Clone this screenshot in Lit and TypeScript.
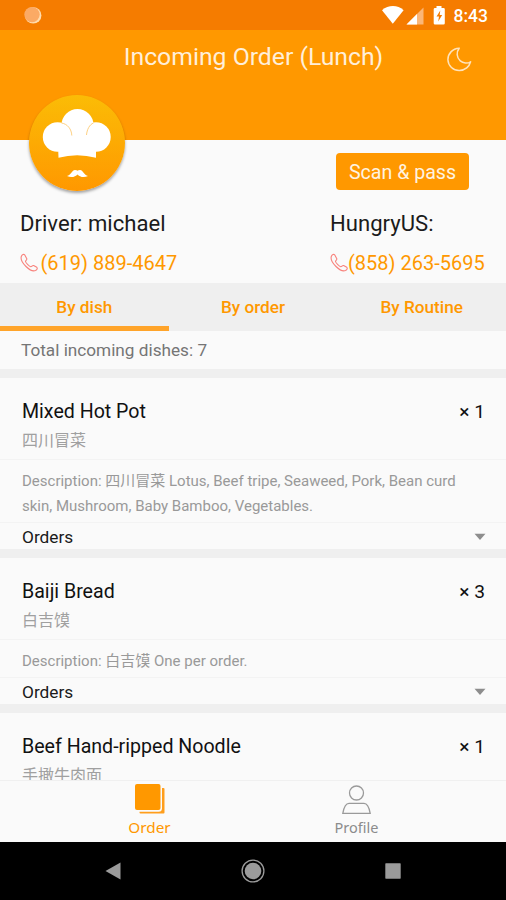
import { LitElement, html, css, nothing } from "lit";
import { customElement, property } from "lit/decorators.js";

interface Dish {
  name: string;
  local: string;
  count: number;
  description?: string;
}

const DISHES: Dish[] = [
  {
    name: "Mixed Hot Pot",
    local: "四川冒菜",
    count: 1,
    description:
      "四川冒菜 Lotus, Beef tripe, Seaweed, Pork, Bean curd skin, Mushroom, Baby Bamboo, Vegetables.",
  },
  { name: "Baiji Bread", local: "白吉馍", count: 3, description: "白吉馍 One per order." },
  { name: "Beef Hand-ripped Noodle", local: "手撖牛肉面", count: 1 },
];

@customElement("status-bar")
class StatusBar extends LitElement {
  static styles = css`
    :host { display: flex; align-items: center; height: 30px; background: #f57c00; padding: 0 18px 0 23px; box-sizing: border-box; }
    .grow { flex: 1; }
    .time { font-size: 17.500px; font-weight: 500; color: #fff; line-height: 30px; padding-top: 2px; }
    svg { display: block; }
  `;
  render() {
    return html`
      <svg width="20" height="30" viewBox="0 0 20 30">
        <circle cx="10.2" cy="15.4" r="8.2" fill="#ffdcae" />
        <circle cx="9" cy="14.6" r="7.7" fill="#fbaa65" />
      </svg>
      <span class="grow"></span>
      <svg width="72" height="30" viewBox="381 0 72 30">
        <path d="M381 10.200C387.500 4.700 396.500 4.700 402.600 10.200L391.800 23.800Z" fill="#fff" />
        <path d="M422.500 7.500V24.500H405.500Z" fill="#fbb678" />
        <path d="M416 14V24.500H405.500Z" fill="#fff" />
        <path d="M435.500 6H440.500V8H442.500Q443.800 8 443.800 9.300V23.300Q443.800 24.600 442.500 24.600H434Q432.700 24.600 432.700 23.300V9.300Q432.700 8 434 8H435.500Z" fill="#fff" />
        <path d="M439.300 10.500L435.500 16.500H438L437.200 21.500L441.200 15H438.700Z" fill="#f57c00" />
      </svg>
      <span class="time">8:43</span>
    `;
  }
}

@customElement("call-link")
class CallLink extends LitElement {
  @property() number = "";
  static styles = css`
    :host { display: flex; align-items: center; height: 26px; color: #ff9800; font-size: 20px; white-space: nowrap; }
    svg { display: block; flex: none; width: 18px; height: 19px; margin-right: var(--call-gap, 2.500px); }
    .num { line-height: 26px; }
  `;
  render() {
    return html`
      <svg viewBox="0 0 18 19" fill="none" stroke="#f8827c" stroke-width="1.1" stroke-linejoin="round" stroke-linecap="round">
        <path d="M1.400 3.200C.4 5.800 2.500 10 6 13.500C9.500 16.900 13.300 18.500 15.500 17.500C17 16.700 17.800 15.400 16.800 14.300L13.600 12.500C12.300 12 11.900 13.800 10.800 13.700C9.400 13.300 6 10 5.500 8.600C5.300 7.500 7.200 7 6.800 5.700L4.800 2C3.800 .7 2.100 1.500 1.400 3.200Z" />
      </svg>
      <span class="num">${this.number}</span>
    `;
  }
}

@customElement("dish-card")
class DishCard extends LitElement {
  @property({ attribute: false }) dish!: Dish;
  static styles = css`
    :host { display: block; flex: none; background: #fafafa; margin-bottom: 9px; }
    .head { display: flex; justify-content: space-between; height: 82px; padding: 21px 21px 0 22px; box-sizing: border-box; border-bottom: 1px solid #f3f3f3; }
    .name, .count { line-height: 26px; color: #111; white-space: nowrap; }
    .name { font-size: 19.600px; }
    .count { font-size: 19.200px; }
    .local { font-size: 16px; line-height: 24px; margin-top: 4px; color: #a0a0a0; }
    .desc { padding: 9px 24px 3px 22px; font-size: 15px; line-height: 25px; color: #999; border-bottom: 1px solid #f3f3f3; }
    .orders { display: flex; align-items: center; justify-content: space-between; height: 26px; padding: 0 20px 0 22px; font-size: 17.300px; line-height: 26px; color: #1b1b1b; }
    .orders span { padding-top: 1px; }
    svg { display: block; margin-top: 1px; }
  `;
  render() {
    const d = this.dish;
    return html`
      <div class="head">
        <div>
          <div class="name">${d.name}</div>
          <div class="local">${d.local}</div>
        </div>
        <div class="count">× ${d.count}</div>
      </div>
      ${d.description
        ? html`<div class="desc">Description: ${d.description}</div>
            <div class="orders">
              <span>Orders</span>
              <svg width="12" height="8" viewBox="0 0 12 8"><path d="M.5 .8H11.500L6 7Z" fill="#8d8d8d" /></svg>
            </div>`
        : nothing}
    `;
  }
}

@customElement("app-root")
class AppRoot extends LitElement {
  static styles = css`
    :host { display: flex; flex-direction: column; width: 506px; height: 900px; overflow: hidden; background: #fafafa; font-family: Roboto, "Noto Sans CJK SC", sans-serif; color: #1b1b1b; }
    .header { position: relative; flex: none; height: 110px; background: #ff9800; display: grid; grid-template-columns: 1fr auto 1fr; align-items: start; }
    .title { grid-column: 2; font-size: 24.750px; line-height: 30px; margin-top: 12px; padding-left: 1px; color: #ffefd9; white-space: nowrap; }
    .moon { justify-self: end; margin: 16px 34px 0 0; display: block; }
    .avatar { position: absolute; left: 29px; top: 65px; width: 96px; height: 96px; border-radius: 50%; background: linear-gradient(#fbbc06, #ff9800); box-shadow: 0 2px 3px rgba(0, 0, 0, 0.35); }
    .avatar svg { display: block; }
    .info { flex: none; height: 143px; box-sizing: border-box; padding: 13px 21px 0 20px; display: grid; grid-template-columns: 310px 1fr; grid-template-rows: 37px 61px 23px; align-items: center; }
    .scan { grid-column: 2; justify-self: start; margin-left: 6px; width: 133px; height: 37px; border-radius: 4px; background: #ff9800; color: #fff3e0; font-size: 19.600px; line-height: 39px; text-align: center; white-space: nowrap; }
    .who { font-size: 22.100px; line-height: 28px; padding-top: 5px; white-space: nowrap; }
    .tight { --call-gap: 0px; }
    .tabs { flex: none; display: grid; grid-template-columns: repeat(3, 1fr); height: 48px; background: #efefef; }
    .tab { text-align: center; font-size: 17.200px; font-weight: 500; line-height: 49px; color: #ff9800; box-sizing: border-box; height: 48px; }
    .tab.on { border-bottom: 5px solid #ffa42a; }
    .total { flex: none; height: 38px; line-height: 39px; padding-left: 21px; font-size: 17.200px; color: #757575; }
    .list { flex: 1; min-height: 0; overflow: hidden; display: flex; flex-direction: column; background: #efefef; padding-top: 9px; }
    .nav { flex: none; height: 62px; box-sizing: border-box; border-top: 1px solid #f0f0f0; background: #fafafa; display: grid; grid-template-columns: 1fr 1fr; padding: 0 46px; }
    .item { display: flex; flex-direction: column; align-items: center; font-family: "Noto Sans", sans-serif; font-size: 14.500px; color: #8c8c8c; line-height: 20px; }
    .item svg { display: block; margin: 2px 0 3px; }
    .item.on { color: #ff9800; font-size: 15.300px; }
    .system { flex: none; height: 58px; background: #000; display: grid; grid-template-columns: repeat(3, 140px); justify-content: center; justify-items: center; align-items: center; }
    .system svg { display: block; }
  `;
  render() {
    return html`
      <status-bar></status-bar>
      <div class="header">
        <div class="title">Incoming Order (Lunch)</div>
        <svg class="moon" width="26" height="26" viewBox="0 0 26 26" fill="none" stroke="#ffe3bb" stroke-width="1.500" stroke-linejoin="round">
          <path d="M13.200 2.200C6.500 2.500 1.700 7.800 1.900 13.800C2.200 20 7.300 24.600 13.300 24.500C19.200 24.400 23.400 20.500 24.600 15.800C21.500 17.900 17.100 17.400 14.300 14.900C10.500 11.500 10.200 6 13.200 2.200Z" />
        </svg>
        <div class="avatar">
          <svg width="96" height="96" viewBox="0 0 96 96">
            <g fill="#fff">
              <circle cx="28.500" cy="42" r="14.700" />
              <circle cx="67" cy="42" r="14.700" />
              <circle cx="48.500" cy="30" r="16" />
              <path d="M28.500 36H67V62.800Q48 57.500 29.500 62.800Z" />
              <path d="M38 81C42 80 43 75 46 75Q47.800 75 48.500 75.800Q49.200 75 51 75C54 75 55 80 59 81C55 83 50.500 82 48.500 79.500C46.500 82 42 83 38 81Z" />
            </g>
            <path d="M32.500 28C38.500 29 42.500 34 42.800 40.500M64.500 28C60.500 29.500 58 34.500 57.500 40" fill="none" stroke="#fdc463" stroke-width=".8" />
          </svg>
        </div>
      </div>
      <div class="info">
        <div class="scan">Scan &amp; pass</div>
        <div class="who">Driver: michael</div>
        <div class="who">HungryUS:</div>
        <call-link number="(619) 889-4647"></call-link>
        <call-link class="tight" number="(858) 263-5695"></call-link>
      </div>
      <div class="tabs">
        <div class="tab on">By dish</div>
        <div class="tab">By order</div>
        <div class="tab">By Routine</div>
      </div>
      <div class="total">Total incoming dishes: 7</div>
      <div class="list">${DISHES.map((d) => html`<dish-card .dish=${d}></dish-card>`)}</div>
      <div class="nav">
        <div class="item on">
          <svg width="31" height="31" viewBox="0 0 31 31">
            <rect x="5.500" y="5" width="25" height="25.500" rx="1" fill="#ff9e1c" />
            <rect x="0" y="0" width="28" height="28.800" rx="3.500" fill="#fafafa" />
            <rect x="1" y="1" width="25.500" height="26" rx="2" fill="#ff9800" />
          </svg>
          Order
        </div>
        <div class="item">
          <svg width="31" height="31" viewBox="0 0 31 31" fill="none" stroke="#9a9a9a" stroke-width="1.300">
            <circle cx="15.500" cy="10" r="7" />
            <path d="M1.800 30.400Q3.500 20.300 8 20.300H23Q27.500 20.300 29.200 30.400Z" />
          </svg>
          Profile
        </div>
      </div>
      <div class="system">
        <svg width="18" height="20" viewBox="0 0 18 20"><path d="M1.500 10L16.500 1.500V18.500Z" fill="#9b9b9b" /></svg>
        <svg width="24" height="24" viewBox="0 0 24 24">
          <circle cx="12" cy="12" r="10.900" fill="none" stroke="#9b9b9b" stroke-width="1.300" />
          <circle cx="12" cy="12" r="8.300" fill="#9b9b9b" />
        </svg>
        <svg width="16" height="16" viewBox="0 0 16 16"><rect x=".3" y=".3" width="15.400" height="15.400" rx=".6" fill="#9b9b9b" /></svg>
      </div>
    `;
  }
}
